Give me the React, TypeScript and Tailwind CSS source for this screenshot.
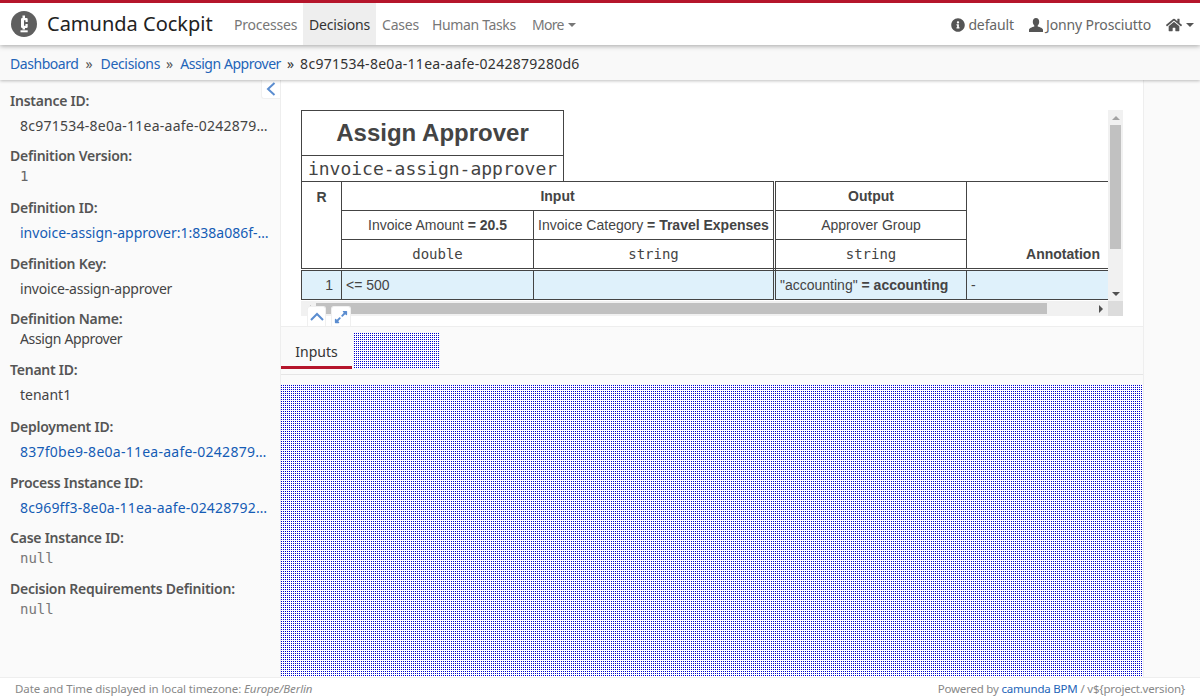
import React from "react";
import { FaInfoCircle, FaHome, FaExpandAlt } from "react-icons/fa";

const dither =
  "bg-[#0000cc] bg-[linear-gradient(to_right,transparent_1px,#fff_1px),linear-gradient(to_bottom,transparent_1px,#fff_1px)] bg-size-[2px_2px]";

const monoValue = "font-['DejaVu_Sans_Mono',monospace] text-[14px]";

const fields = [
  { label: "Instance ID:", value: "8c971534-8e0a-11ea-aafe-0242879280d6", h: "h-[55px]", pt: "pt-[5px]", cls: "text-[#444] tracking-[0.25px]" },
  { label: "Definition Version:", value: "1", h: "h-[52px]", pt: "", cls: "text-[#666] " + monoValue },
  { label: "Definition ID:", value: "invoice-assign-approver:1:838a086f-8e09-11ea", h: "h-[56px]", pt: "pt-[5px]", cls: "text-[#155cb5]" },
  { label: "Definition Key:", value: "invoice-assign-approver", h: "h-[55px]", pt: "pt-[5px]", cls: "text-[#444] tracking-[-0.2px]" },
  { label: "Definition Name:", value: "Assign Approver", h: "h-[51px]", pt: "", cls: "text-[#444] tracking-[-0.35px]" },
  { label: "Tenant ID:", value: "tenant1", h: "h-[57px]", pt: "pt-[5px]", cls: "text-[#444]" },
  { label: "Deployment ID:", value: "837f0be9-8e0a-11ea-aafe-0242879280d6", h: "h-[56px]", pt: "pt-[5px]", cls: "text-[#155cb5] tracking-[0.25px]" },
  { label: "Process Instance ID:", value: "8c969ff3-8e0a-11ea-aafe-0242879280d6", h: "h-[55px]", pt: "pt-[5px]", cls: "text-[#155cb5] tracking-[0.17px]" },
  { label: "Case Instance ID:", value: "null", h: "h-[51px]", pt: "", cls: "text-[#777] " + monoValue },
  { label: "Decision Requirements Definition:", value: "null", h: "h-[51px]", pt: "", cls: "text-[#777] " + monoValue },
];

const cell = "border border-[#444] px-1 align-middle text-center font-normal";
const mono = "font-['DejaVu_Sans_Mono',monospace]";

function Caret({ className = "" }: { className?: string }) {
  return <span className={"inline-block w-0 h-0 border-x-4 border-x-transparent border-t-4 border-t-current " + className} />;
}

function Logo() {
  return (
    <svg width="26" height="26" viewBox="0 0 26 26" className="shrink-0">
      <circle cx="13" cy="13" r="13" fill="#5f5f5f" />
      <path
        d="M11.5 4.5h2.5V7h1.5q1.2 0 1.2 1.2V11h-2.2V9.2h-1.5v5.6h1.5V13h2.2v2.8q0 1.2-1.2 1.2H14v1.5h-2.5V17h-.3Q10 17 10 15.8V8.2Q10 7 11.2 7h.3z"
        fill="#fff"
      />
      <rect x="9.5" y="19.3" width="7.2" height="2" fill="#fff" />
    </svg>
  );
}

function UserGlyph() {
  return (
    <svg width="14" height="14" viewBox="0 0 14 14" fill="#555" className="mr-[3px] ml-[15px]">
      <path d="M7 0c2 0 3.2 1.5 3.2 3.8 0 1.6-.7 3-1.5 3.8v1c2.3.8 5.3 1.6 5.3 3.2V14H0v-2.2c0-1.6 3-2.4 5.3-3.2v-1C4.5 6.8 3.8 5.4 3.8 3.8 3.8 1.5 5 0 7 0z" />
    </svg>
  );
}

function Chevron({ d, w, h }: { d: string; w: number; h: number }) {
  return (
    <svg width={w} height={h} viewBox={`0 0 ${w} ${h}`} fill="none" stroke="#5b8dd0" strokeWidth="2">
      <path d={d} />
    </svg>
  );
}

function Row({ n, a, b, c, d, active }: { n: string; a: string; b: string; c: React.ReactNode; d: string; active?: boolean }) {
  const bg = active ? "bg-[#dff1fb]" : "bg-white";
  return (
    <tr className={"h-[30px] " + bg}>
      <td className={cell + " text-right! pr-2"}>{n}</td>
      <td className={cell + " text-left!"}>{a}</td>
      <td className={cell + " text-left!"}>{b}</td>
      <td className={cell + " text-left! border-l-[3px] border-l-[#444] border-double"}>{c}</td>
      <td className={cell + " text-left!"}>{d}</td>
    </tr>
  );
}

export default function App() {
  return (
    <div className="h-[700px] w-[1200px] flex flex-col overflow-hidden bg-white text-[14px] leading-5 text-[#444] font-['Noto_Sans','Open_Sans',sans-serif]">
      <header className="relative z-20 h-[45px] shrink-0 border-t-[3px] border-[#b5152b] bg-white shadow-[0_1px_5px_rgba(0,0,0,0.35)] flex items-stretch">
        <div className="flex items-center pl-[11px] w-[234px] shrink-0">
          <Logo />
          <span className="ml-[10px] text-[20px] text-[#222] whitespace-nowrap">Camunda Cockpit</span>
        </div>
        <nav className="flex items-stretch text-[#777] whitespace-nowrap tracking-[-0.2px] pt-[2px]">
          <span className="flex items-center w-[69px]">Processes</span>
          <span className="flex items-center justify-center w-[73px] bg-[#eee] text-[#333] -mt-[2px] pt-[2px]">Decisions</span>
          <span className="flex items-center pl-[6px] w-[56px]">Cases</span>
          <span className="flex items-center w-[100px] tracking-[-0.35px]">Human Tasks</span>
          <span className="flex items-center gap-[4px] tracking-[-0.7px]">
            More <Caret />
          </span>
        </nav>
        <div className="ml-auto flex items-center pr-[6px] pt-[2px] text-[#666] whitespace-nowrap tracking-[-0.13px]">
          <FaInfoCircle className="text-[14px] text-[#555] mr-[3px]" />
          <span>default</span>
          <UserGlyph />
          <span>Jonny Prosciutto</span>
          <FaHome className="text-[16px] text-[#555] ml-[15px] mr-[4px]" />
          <Caret className="text-[#555]" />
        </div>
      </header>

      <div className="relative z-10 h-[35px] shrink-0 bg-[#f9f9f9] shadow-[0_1px_3px_rgba(0,0,0,0.25)] flex items-center pl-[10px] pt-[2px] text-[#555] whitespace-nowrap">
        <span className="text-[#2364b8] tracking-[-0.45px]">Dashboard</span>
        <span className="ml-[7px] mr-[8px]">»</span>
        <span className="text-[#2364b8] tracking-[-0.35px]">Decisions</span>
        <span className="ml-[6px] mr-[7px]">»</span>
        <span className="text-[#2364b8] tracking-[-0.45px]">Assign Approver</span>
        <span className="mx-[6px] text-[#333]">»</span>
        <span className="text-[#333] tracking-[0.28px]">8c971534-8e0a-11ea-aafe-0242879280d6</span>
      </div>

      <div className="flex-1 min-h-0 flex">
        <aside className="relative w-[281px] shrink-0 border-r border-[#eee] bg-[#fafafa] pl-[10px] pr-[11px] pt-[11px]">
          <button className="absolute right-0 top-0 w-[19px] h-[19px] bg-white rounded-bl-[3px] flex items-center justify-center border-l border-b border-[#f0f0f0]">
            <Chevron w={10} h={14} d="M8.5 1 2 7l6.5 6" />
          </button>
          {fields.map((f) => (
            <div key={f.label} className={f.h}>
              <div className="font-semibold text-[#555] whitespace-nowrap tracking-[-0.24px]">{f.label}</div>
              <div className={"pl-[10px] truncate " + f.pt + " " + f.cls}>{f.value}</div>
            </div>
          ))}
        </aside>

        <main className="w-[862px] shrink-0 flex flex-col bg-[#fafafa]">
          <div className="relative h-[247px] shrink-0 bg-white px-5 pt-[30px] border-b border-[#eee]">
            <div className="grid grid-cols-[807px_15px] grid-rows-[191px_15px] w-[822px] h-[206px] text-[14px] text-[#444] font-['Liberation_Sans',Arial,sans-serif]">
              <div className="overflow-hidden">
                <div className="w-[263px] h-[71px] border-x border-t border-[#444] box-border">
                  <div className="h-[45px] border-b border-[#444] flex items-center justify-center text-[24px] font-bold text-[#444]">
                    Assign Approver
                  </div>
                  <div className={"h-[25px] flex items-center justify-center text-[18px] leading-none " + mono}>invoice-assign-approver</div>
                </div>
                <table className="table-fixed border-collapse w-[858px]">
                  <colgroup>
                    <col className="w-[40px]" />
                    <col className="w-[192px]" />
                    <col className="w-[241px]" />
                    <col className="w-[192px]" />
                    <col className="w-[193px]" />
                  </colgroup>
                  <thead>
                    <tr className="h-[29px]">
                      <th rowSpan={3} className={cell + " align-top! pt-[5px] font-bold! border-b-[3px] border-double"}>R</th>
                      <th colSpan={2} className={cell + " font-bold! border-r-[3px] border-double border-t border-t-[#444]"}>Input</th>
                      <th className={cell + " font-bold!"}>Output</th>
                      <th rowSpan={3} className={cell + " align-bottom! pb-[4px] font-bold! border-b-[3px] border-double"}>Annotation</th>
                    </tr>
                    <tr className="h-[29px]">
                      <th className={cell}>Invoice Amount <b>= 20.5</b></th>
                      <th className={cell + " border-r-[3px] border-double whitespace-nowrap"}>Invoice Category <b>= Travel Expenses</b></th>
                      <th className={cell}>Approver Group</th>
                    </tr>
                    <tr className="h-[30px]">
                      <th className={cell + " border-b-[3px] border-double " + mono}>double</th>
                      <th className={cell + " border-b-[3px] border-r-[3px] border-double " + mono}>string</th>
                      <th className={cell + " border-b-[3px] border-double " + mono}>string</th>
                    </tr>
                  </thead>
                  <tbody>
                    <Row n="1" a="<= 500" b="" c={<>"accounting" <b>= accounting</b></>} d="-" active />
                  </tbody>
                </table>
              </div>

              <div className="flex flex-col bg-[#f1f1f1]">
                <div className="h-[15px] flex items-center justify-center">
                  <span className="w-0 h-0 border-x-[4px] border-x-transparent border-b-[4px] border-b-[#a3a3a3]" />
                </div>
                <div className="flex-1 flex flex-col">
                  <div className="h-[124px] mx-[2px] bg-[#c1c1c1]" />
                </div>
                <div className="h-[15px] flex items-center justify-center">
                  <span className="w-0 h-0 border-x-[4px] border-x-transparent border-t-[4px] border-t-[#505050]" />
                </div>
              </div>

              <div className="flex bg-[#f1f1f1]">
                <div className="w-[15px] flex items-center justify-center">
                  <span className="w-0 h-0 border-y-[4px] border-y-transparent border-r-[4px] border-r-[#a3a3a3]" />
                </div>
                <div className="flex-1 flex flex-col justify-center">
                  <div className="w-[731px] h-[11px] bg-[#c1c1c1]" />
                </div>
                <div className="w-[15px] flex items-center justify-center">
                  <span className="w-0 h-0 border-y-[4px] border-y-transparent border-l-[4px] border-l-[#505050]" />
                </div>
              </div>
              <div className="bg-[#dcdcdc]" />
            </div>
            <button className="absolute left-[26px] top-[226px] w-[19px] h-[20px] bg-white border border-b-0 border-[#f0f0f0] rounded-t-[3px] flex items-center justify-center">
              <Chevron w={14} h={9} d="M1 8 7 2l6 6" />
            </button>
            <button className="absolute left-[50px] top-[226px] w-[20px] h-[20px] bg-white border border-b-0 border-[#f0f0f0] rounded-t-[3px] flex items-center justify-center text-[#5b8dd0]">
              <FaExpandAlt className="text-[14px]" />
            </button>
          </div>

          <div className="h-[48px] shrink-0 border-b border-[#e5e5e5] flex items-start">
            <div className="w-[71px] h-[42px] pt-[15px] border-b-[3px] border-[#b5152b] text-center text-[#333]">Inputs</div>
            <div className={"w-[85px] h-[35px] ml-[2px] mt-[6px] " + dither} />
          </div>

          <div className={"flex-1 mt-[10px] " + dither} />
        </main>

        <div className="flex-1 border-l border-[#eee] bg-[#fafafa]" />
      </div>

      <footer className="relative h-[23px] shrink-0 border-t border-[#eee] bg-white flex items-center justify-between pl-[15px] pr-[15px] text-[11.5px] text-[#888]">
        <span className="tracking-[-0.1px]">
          Date and Time displayed in local timezone: <i>Europe/Berlin</i>
        </span>
        <span className="tracking-[-0.2px]">
          Powered by <span className="text-[#2364b8]">camunda BPM</span> / v{"${project.version}"}
        </span>
      </footer>
    </div>
  );
}
